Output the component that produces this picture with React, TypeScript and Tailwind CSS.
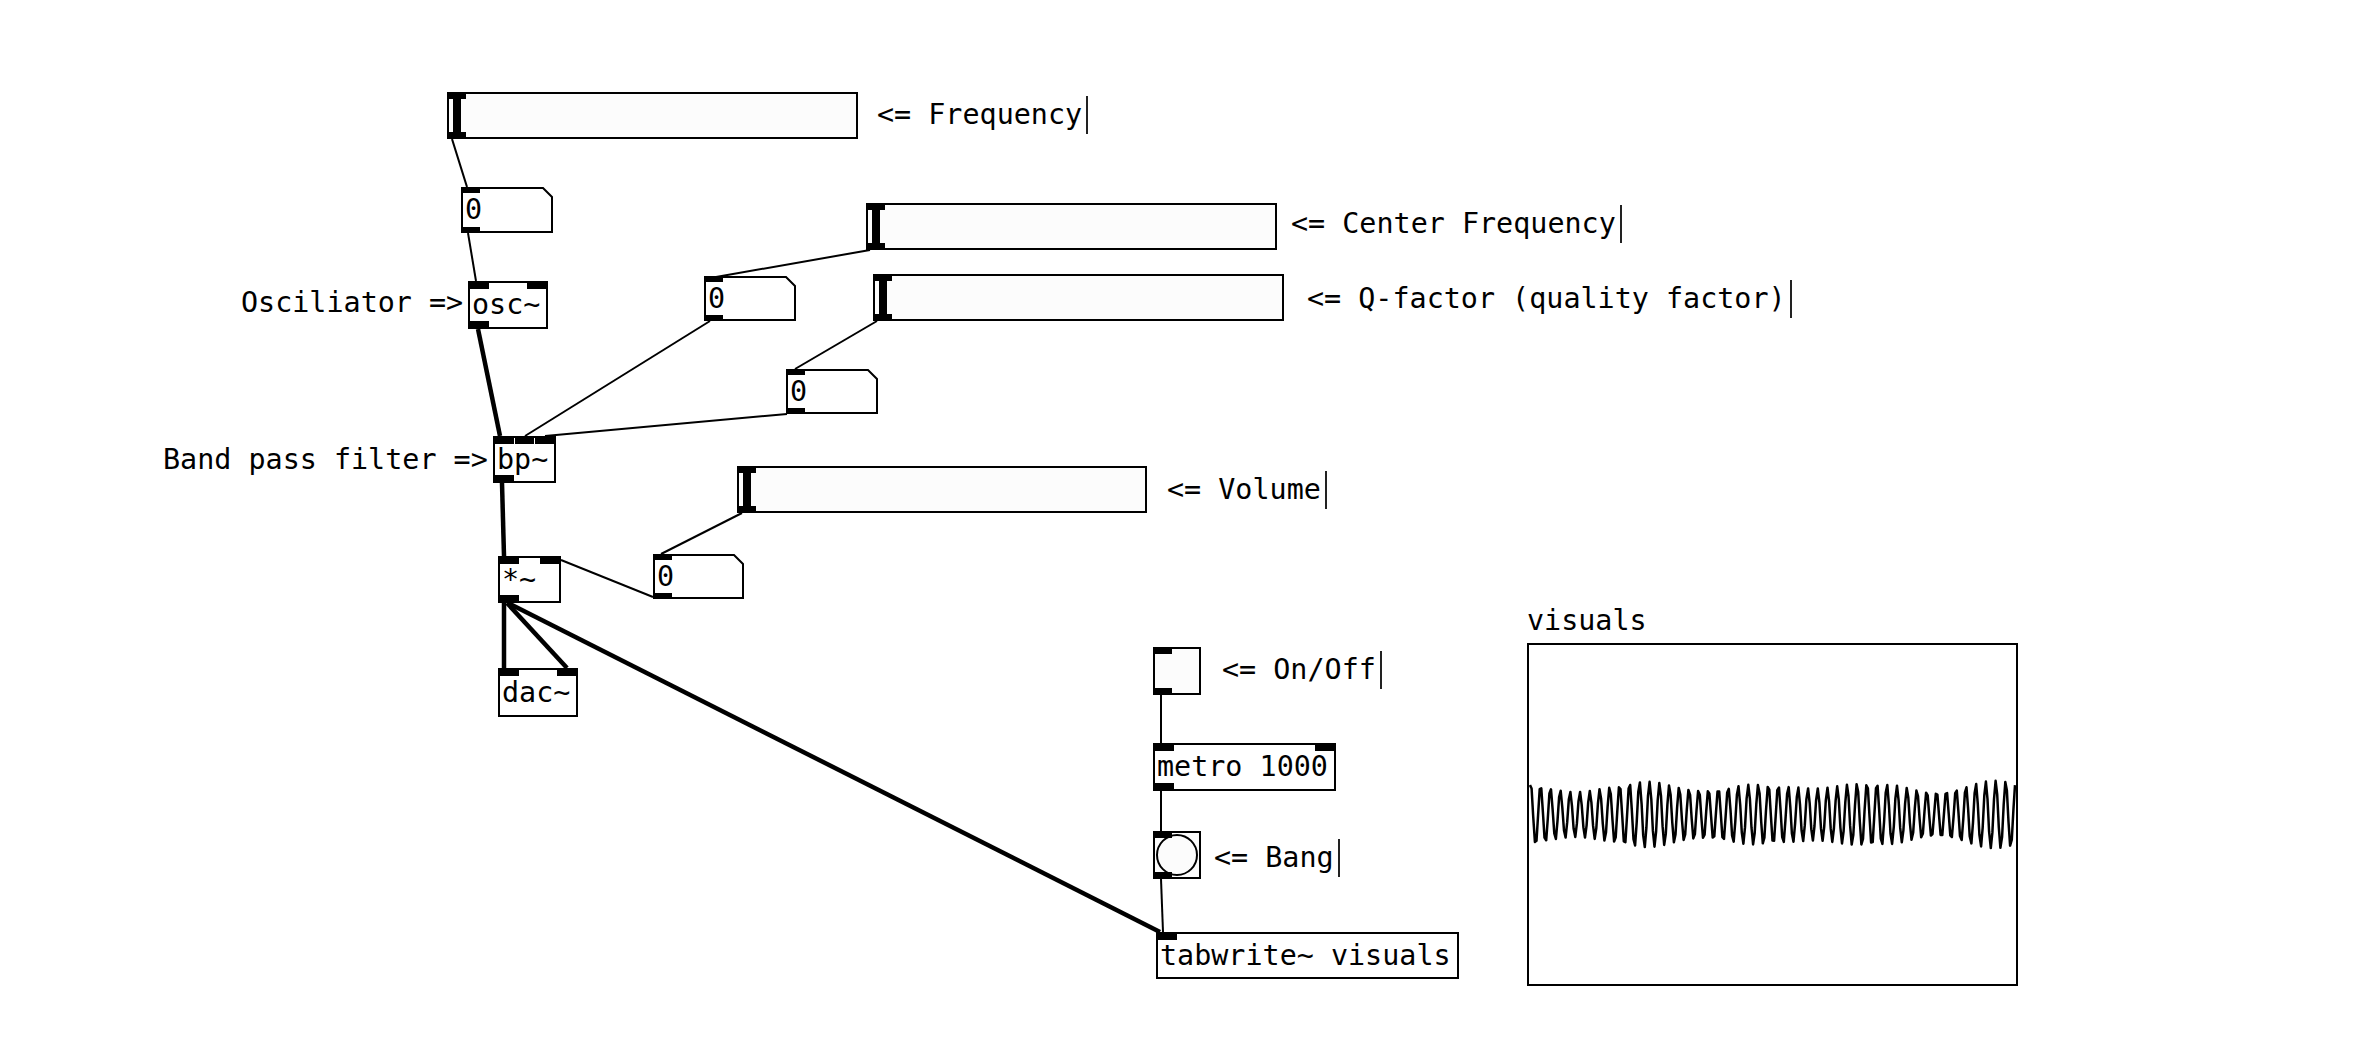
import React from 'react'

const FONT = "font-['DejaVu_Sans_Mono','Liberation_Mono',monospace] text-[28.4px] leading-none text-black"

type Box = { x: number; y: number; w: number; h?: number }

function Ports({ w, count, top }: { w: number; count: number; top: boolean }) {
  if (count === 0) return null
  const items = Array.from({ length: count }, (_, i) => (count === 1 ? 0 : ((w - 19) * i) / (count - 1)))
  return (
    <>
      {items.map((left, i) => (
        <div
          key={i}
          className={`absolute h-[6px] w-[19px] bg-black ${top ? 'top-0' : 'bottom-0'}`}
          style={{ left }}
        />
      ))}
    </>
  )
}

// plain object box: osc~, bp~, metro ...
function Obj({ x, y, w, h = 47, text, ins = 1, outs = 1 }: Box & { text: string; ins?: number; outs?: number }) {
  return (
    <div
      className="absolute border-2 border-black bg-white"
      style={{ left: x, top: y, width: w, height: h }}
    >
      <Ports w={w - 4} count={ins} top />
      <Ports w={w - 4} count={outs} top={false} />
      <div className={`${FONT} flex h-full items-center pl-[2px] pt-[1px] whitespace-pre`}>{text}</div>
    </div>
  )
}

function NumBox({ x, y, w = 92, h = 46 }: Box) {
  return (
    <div className="absolute" style={{ left: x, top: y, width: w, height: h }}>
      <svg width={w} height={h} className="absolute inset-0">
        <polygon
          points={`1,1 ${w - 10},1 ${w - 1},10 ${w - 1},${h - 1} 1,${h - 1}`}
          fill="white"
          stroke="black"
          strokeWidth={2}
        />
      </svg>
      <div className="absolute left-0 top-0 h-[6px] w-[19px] bg-black" />
      <div className="absolute bottom-0 left-0 h-[6px] w-[19px] bg-black" />
      <div className={`${FONT} relative flex h-full items-center pl-[4px] pt-[1px]`}>0</div>
    </div>
  )
}

function HSlider({ x, y, w = 411, h = 47 }: Box) {
  return (
    <div
      className="absolute border-2 border-black bg-[#fcfcfc]"
      style={{ left: x, top: y, width: w, height: h }}
    >
      <div className="absolute left-[4px] top-0 h-full w-[8px] bg-black" />
      <div className="absolute left-0 top-0 h-[5px] w-[17px] bg-black" />
      <div className="absolute bottom-0 left-0 h-[5px] w-[17px] bg-black" />
    </div>
  )
}

// comment text, with the edit-mode width marker after it
function Comment({ x, cy, text, cursor = false }: { x: number; cy: number; text: string; cursor?: boolean }) {
  return (
    <div className="absolute flex h-[38px] items-center gap-[4px]" style={{ left: x, top: cy - 19 }}>
      <span className={`${FONT} whitespace-pre`}>{text}</span>
      {cursor && <span className="h-[38px] w-[2px] bg-[#222]" />}
    </div>
  )
}

const thin: [number, number, number, number][] = [
  [452, 139, 467, 187],
  [468, 233, 476, 281],
  [870, 250, 716, 277],
  [710, 321, 525, 436],
  [877, 321, 795, 369],
  [787, 414, 545, 436],
  [742, 513, 661, 554],
  [653, 597, 561, 560],
  [1161, 695, 1161, 743],
  [1161, 791, 1161, 831],
  [1161, 879, 1163, 932],
]

const thick: [number, number, number, number][] = [
  [478, 329, 500, 436],
  [502, 483, 504, 556],
  [504, 603, 504, 668],
  [507, 603, 567, 668],
  [508, 603, 1160, 932],
]

function wavePath(w: number, h: number) {
  const n = 300
  const mid = h / 2
  let d = ''
  for (let i = 0; i <= n; i++) {
    const t = i / n
    const v =
      0.88 * Math.sin(2 * Math.PI * 49 * t + 1.2) +
      0.12 * Math.sin(2 * Math.PI * 45 * t + 0.4) +
      0.06 * Math.sin(2 * Math.PI * 52 * t + 2.1)
    const px = 1 + t * (w - 2)
    const py = mid - v * 32
    d += `${i === 0 ? 'M' : 'L'}${px.toFixed(1)},${py.toFixed(1)}`
  }
  return d
}

function Graph({ x, y, w, h }: Box & { h: number }) {
  return (
    <div
      className="absolute border-2 border-black bg-white"
      style={{ left: x, top: y, width: w, height: h }}
    >
      <svg width={w - 4} height={h - 4} className="absolute inset-0">
        <path d={wavePath(w - 4, h - 4)} fill="none" stroke="black" strokeWidth={2.5} strokeLinejoin="round" />
      </svg>
    </div>
  )
}

export default function App() {
  return (
    <div className="relative h-[1048px] w-[2370px] overflow-hidden bg-white">
      <svg width={2370} height={1048} className="absolute inset-0">
        {thin.map(([a, b, c, d], i) => (
          <line key={`t${i}`} x1={a} y1={b} x2={c} y2={d} stroke="black" strokeWidth={2} />
        ))}
        {thick.map(([a, b, c, d], i) => (
          <line key={`k${i}`} x1={a} y1={b} x2={c} y2={d} stroke="black" strokeWidth={4.5} />
        ))}
      </svg>

      <HSlider x={447} y={92} />
      <Comment x={877} cy={115} text="<= Frequency" cursor />

      <NumBox x={461} y={187} />

      <Comment x={241} cy={303} text="Osciliator =>" />
      <Obj x={468} y={281} w={80} h={48} text="osc~" ins={2} />

      <HSlider x={866} y={203} />
      <Comment x={1291} cy={224} text="<= Center Frequency" cursor />

      <NumBox x={704} y={276} h={45} />

      <HSlider x={873} y={274} h={47} />
      <Comment x={1307} cy={299} text="<= Q-factor (quality factor)" cursor />

      <NumBox x={786} y={369} h={45} />

      <Comment x={163} cy={460} text="Band pass filter =>" />
      <Obj x={493} y={436} w={63} text="bp~" ins={3} />

      <HSlider x={737} y={466} w={410} />
      <Comment x={1167} cy={490} text="<= Volume" cursor />

      <Obj x={498} y={556} w={63} text="*~" ins={2} />
      <NumBox x={653} y={554} w={91} h={45} />

      <Obj x={498} y={668} w={80} h={49} text="dac~" ins={2} outs={0} />

      {/* toggle */}
      <div className="absolute h-[48px] w-[48px] border-2 border-black bg-[#fcfcfc]" style={{ left: 1153, top: 647 }}>
        <div className="absolute left-0 top-0 h-[5px] w-[17px] bg-black" />
        <div className="absolute bottom-0 left-0 h-[5px] w-[17px] bg-black" />
      </div>
      <Comment x={1222} cy={670} text="<= On/Off" cursor />

      <Obj x={1153} y={743} w={183} h={48} text="metro 1000" ins={2} />

      {/* bang */}
      <div className="absolute h-[48px] w-[48px] border-2 border-black bg-[#fcfcfc]" style={{ left: 1153, top: 831 }}>
        <div className="absolute inset-[1px] rounded-full border-2 border-black bg-[#fcfcfc]" />
        <div className="absolute left-0 top-0 h-[5px] w-[17px] bg-black" />
        <div className="absolute bottom-0 left-0 h-[5px] w-[17px] bg-black" />
      </div>
      <Comment x={1214} cy={858} text="<= Bang" cursor />

      <Obj x={1156} y={932} w={303} h={47} text="tabwrite~ visuals" ins={1} outs={0} />

      <Comment x={1527} cy={621} text="visuals" />
      <Graph x={1527} y={643} w={491} h={343} />
    </div>
  )
}
